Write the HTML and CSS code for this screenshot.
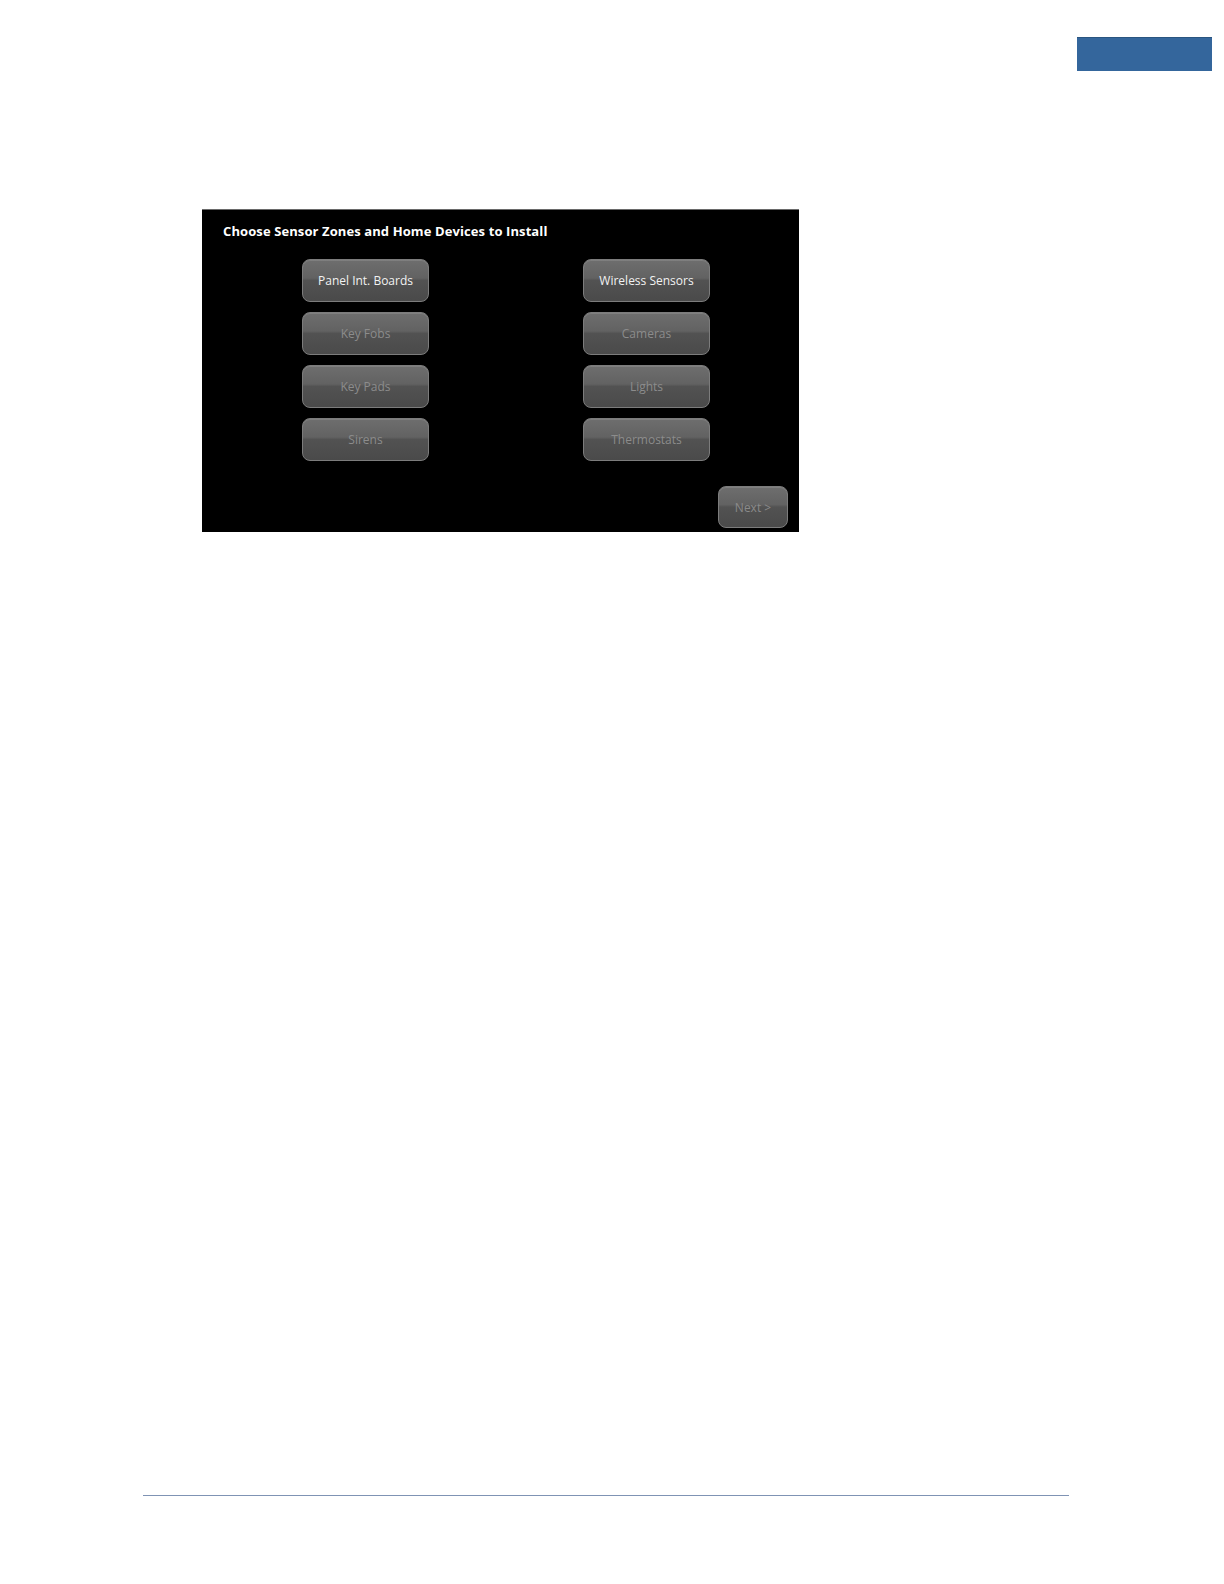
FILE: index.html
```html
<!DOCTYPE html>
<html>
<head>
<meta charset="utf-8">
<link rel="stylesheet" href="styles.css">
</head>
<body>
<div class="page">
  <div class="tab"></div>
  <div class="screen">
    <div class="title">Choose Sensor Zones and Home Devices to Install</div>
    <div class="grid">
      <div class="btn active">Panel Int. Boards</div>
      <div class="btn active">Wireless Sensors</div>
      <div class="btn">Key Fobs</div>
      <div class="btn">Cameras</div>
      <div class="btn">Key Pads</div>
      <div class="btn">Lights</div>
      <div class="btn">Sirens</div>
      <div class="btn">Thermostats</div>
    </div>
    <div class="next-row">
      <div class="btn next">Next &gt;</div>
    </div>
  </div>
  <div class="footer-line"></div>
</div>
</body>
</html>
```
FILE: styles.css
```css
html, body {
  margin: 0;
  padding: 0;
  background: #ffffff;
}
.page {
  width: 1224px;
  height: 1584px;
  display: flex;
  flex-direction: column;
  font-family: "Open Sans", "DejaVu Sans", sans-serif;
}
.tab {
  margin-top: 37px;
  margin-left: 1077px;
  width: 135px;
  height: 34px;
  background: #34669c;
  border-top: 1px solid #2a5580;
  box-sizing: border-box;
}
.screen {
  margin-top: 138px;
  margin-left: 202px;
  width: 597px;
  height: 323px;
  background: #000;
  border-top: 1px solid #6a6a6a;
  box-sizing: border-box;
  display: flex;
  flex-direction: column;
}
.title {
  color: #ffffff;
  font-weight: 700;
  font-size: 13px;
  padding-left: 21px;
  padding-top: 12px;
  height: 37px;
  box-sizing: border-box;
  letter-spacing: 0.1px;
}
.grid {
  display: grid;
  grid-template-columns: 127px 127px;
  column-gap: 154px;
  row-gap: 10px;
  padding-left: 100px;
  padding-top: 12px;
}
.btn {
  height: 43px;
  border: 1px solid #7c7c7c;
  border-radius: 8px;
  box-sizing: border-box;
  background: linear-gradient(to bottom, #6e6e6e 0%, #626262 44%, #525252 50%, #4a4a4a 100%);
  color: #8c8c8c;
  font-size: 12px;
  display: flex;
  align-items: center;
  justify-content: center;
  box-shadow: inset 0 1px 0 rgba(255,255,255,0.12);
}
.btn.active {
  color: #f2f2f2;
}
.next-row {
  margin-top: auto;
  display: flex;
  justify-content: flex-end;
  padding-right: 11px;
  padding-bottom: 4px;
}
.btn.next {
  width: 70px;
  height: 42px;
  color: #8a8a8a;
}
.footer-line {
  margin-top: 963px;
  margin-left: 143px;
  width: 926px;
  height: 1px;
  background: #7f93b4;
}
```
